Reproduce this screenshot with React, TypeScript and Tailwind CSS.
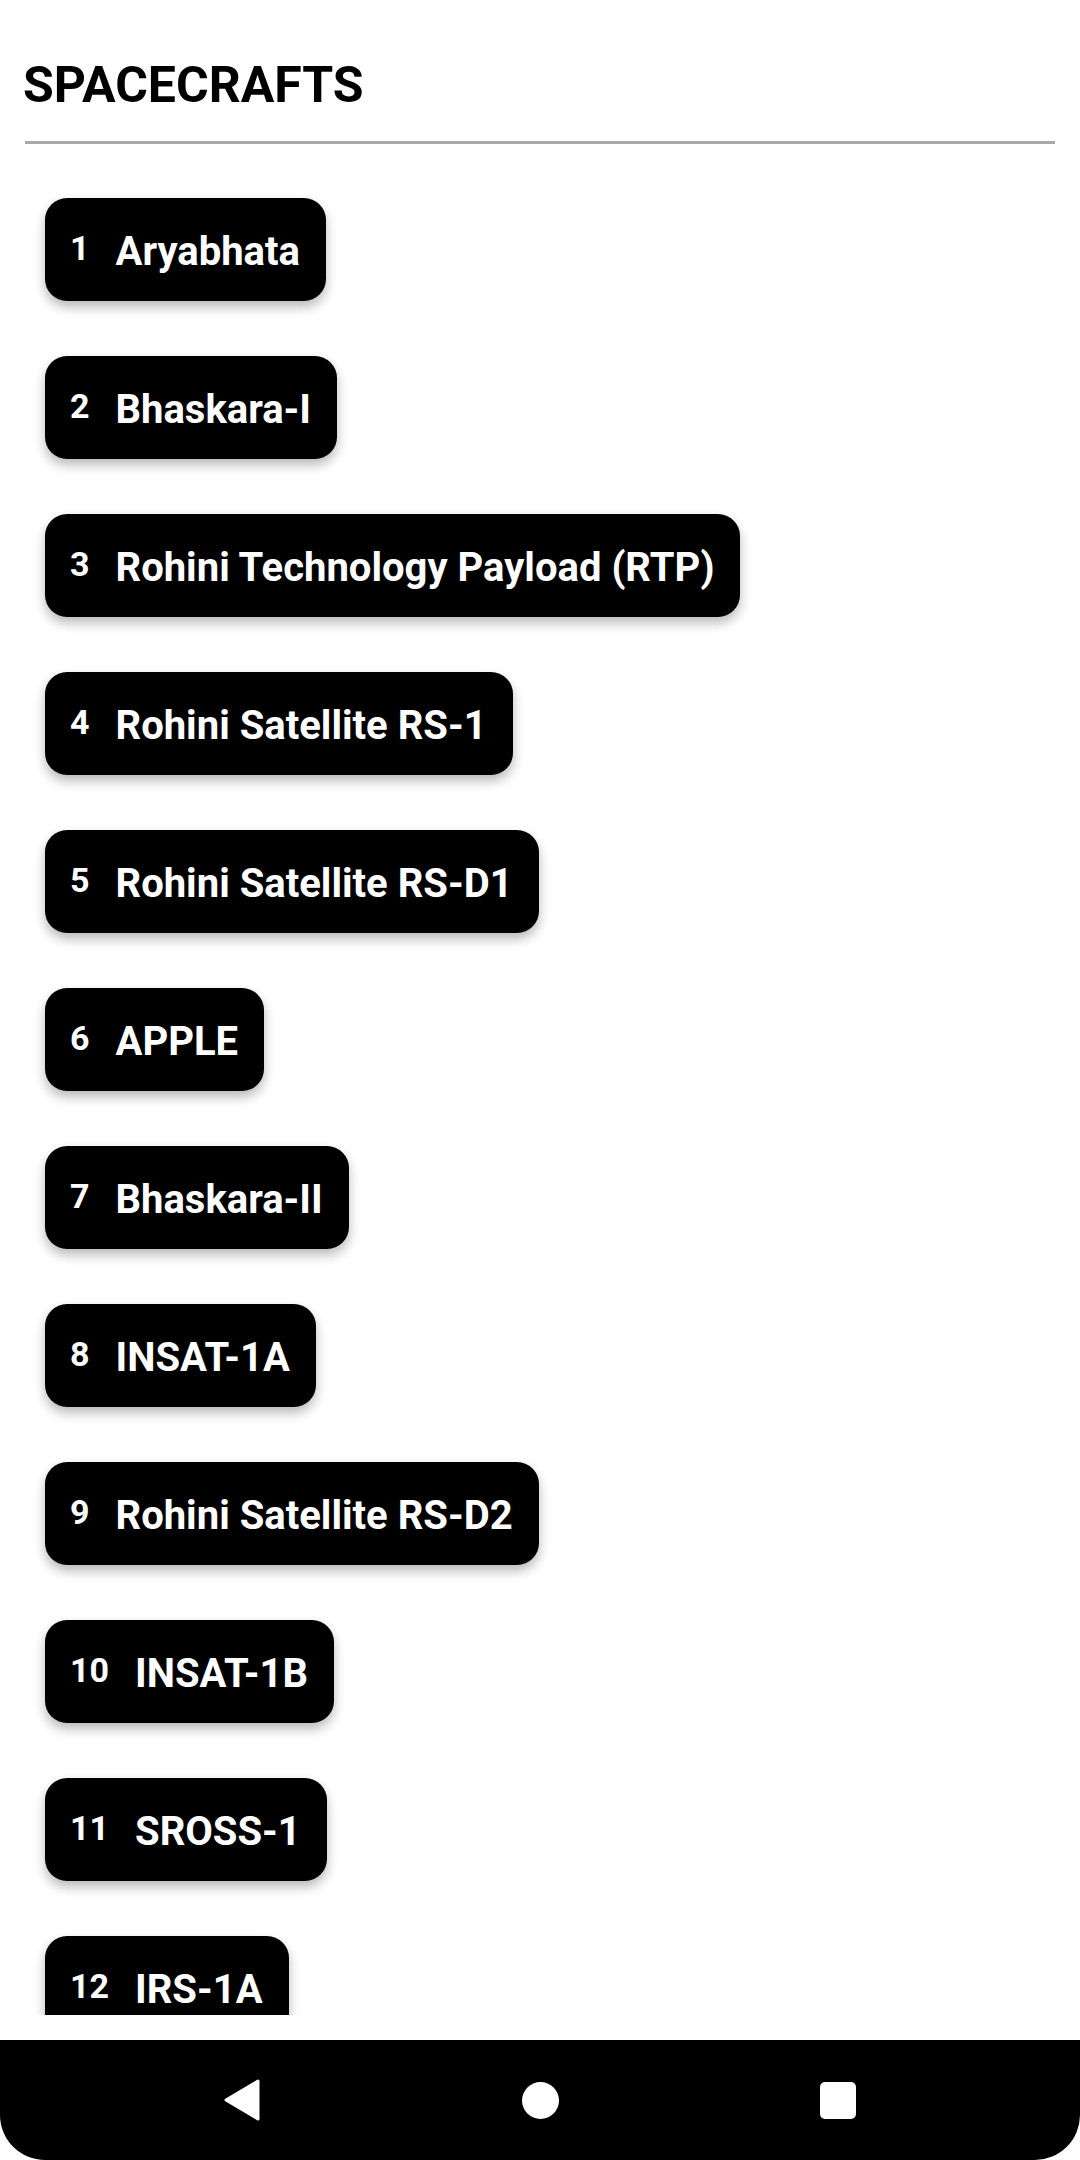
const spacecrafts = [
  "Aryabhata",
  "Bhaskara-I",
  "Rohini Technology Payload (RTP)",
  "Rohini Satellite RS-1",
  "Rohini Satellite RS-D1",
  "APPLE",
  "Bhaskara-II",
  "INSAT-1A",
  "Rohini Satellite RS-D2",
  "INSAT-1B",
  "SROSS-1",
  "IRS-1A",
];

function CraftChip({ index, name }: { index: number; name: string }) {
  return (
    <div className="flex items-start gap-[26px] h-[103px] pl-[25px] pr-[26px] pt-[30px] bg-black rounded-[22px] shadow-[0_6px_12px_rgba(0,0,0,0.28)] shrink-0">
      <span className="text-[34px] leading-[normal] font-bold text-white">{index}</span>
      <span className="text-[40px] leading-[normal] font-bold text-white whitespace-nowrap">
        {name}
      </span>
    </div>
  );
}

function NavBar() {
  return (
    <div className="h-[120px] bg-black rounded-b-[45px] flex items-center justify-center">
      <div className="w-[298px] flex justify-center">
        <svg width="38" height="44" viewBox="0 0 38 44">
          <path
            d="M35 3 L35 41 L3 22 Z"
            fill="white"
            stroke="white"
            strokeWidth="3"
            strokeLinejoin="round"
          />
        </svg>
      </div>
      <div className="w-[298px] flex justify-center">
        <div className="w-[37px] h-[37px] rounded-full bg-white" />
      </div>
      <div className="w-[298px] flex justify-center">
        <div className="w-[36px] h-[37px] rounded-[5px] bg-white" />
      </div>
    </div>
  );
}

export default function App() {
  return (
    <div
      className="w-[1080px] h-[2160px] bg-white flex flex-col"
      style={{ fontFamily: "Roboto, 'Noto Sans', sans-serif" }}
    >
      {/* Header */}
      <h1 className="pt-[56px] pl-[23px] text-[50px] leading-[normal] font-bold text-black">
        SPACECRAFTS
      </h1>
      <div className="mt-[27px] mx-[25px] h-[3px] bg-[#a8a8a8]" />

      {/* List */}
      <div className="flex-1 min-h-0 overflow-hidden mb-[25px]">
        <div className="flex flex-col items-start gap-[55px] pt-[54px] pl-[45px]">
          {spacecrafts.map((name, i) => (
            <CraftChip key={name} index={i + 1} name={name} />
          ))}
        </div>
      </div>

      <NavBar />
    </div>
  );
}
